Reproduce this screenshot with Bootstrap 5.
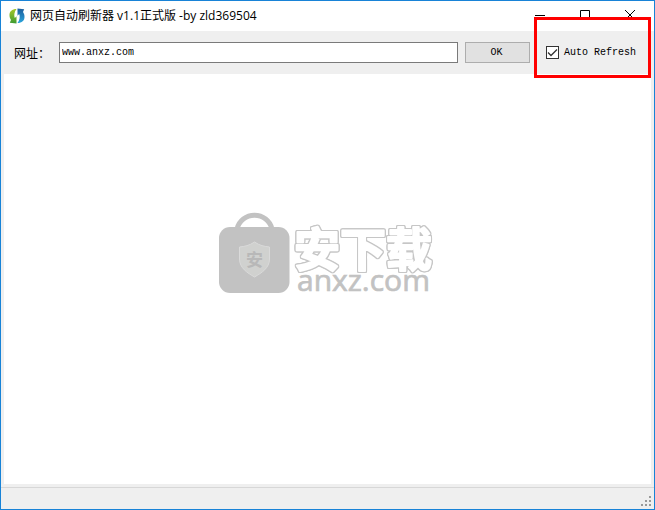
<!DOCTYPE html>
<html lang="zh-CN">
<head>
<meta charset="utf-8">
<meta name="viewport" content="width=device-width, initial-scale=1">
<title>网页自动刷新器</title>
<link href="https://cdn.jsdelivr.net/npm/bootstrap@5.3.0/dist/css/bootstrap.min.css" rel="stylesheet">
<style>
body { font-family: "Open Sans", "Noto Sans CJK SC", sans-serif; font-size: 12px; line-height: 16px; color: #000; }
.app-window { border: 1px solid #1883d7; background: #efefef; }
.title-bar { height: 30px; padding: 0 2px 0 8px; gap: 5px; }
.win-btn { width: 45px; height: 28px; }
.tool-bar { height: 43px; padding: 0 18px 0 13px; gap: 7px; }
.url-label { font-family: "Noto Sans CJK SC", sans-serif; width: 38px; }
.url-input, .ok-btn, .auto-label { font-family: "Liberation Mono", "Noto Sans CJK SC", monospace; font-size: 10px; line-height: 14px; color: #000; }
.url-input { height: 21px; min-width: 0; border: 1px solid #7a7a7a; background: #fff; padding: 0 2px; outline: 0; }
.ok-btn { width: 65px; height: 21px; border: 1px solid #adadad; background: #e1e1e1; padding: 0 2px 0 0; }
.auto-wrap { margin-left: 9px; gap: 5px; }
.auto-box { appearance: none; width: 13px; height: 13px; margin: 0; border: 1px solid #333; background: #fff; }
.auto-box:checked { background: #fff url("data:image/svg+xml,%3Csvg xmlns='http://www.w3.org/2000/svg' viewBox='0 0 11 11'%3E%3Cpath d='M1 5.5 4 8.5 10 2.5' fill='none' stroke='%23333' stroke-width='1.3'/%3E%3C/svg%3E"); }
.auto-wrap::after { content: ""; position: absolute; inset: -29px -15px -18px -12px; border: 3px solid #f00; pointer-events: none; }
.page-view { background: #fff; margin: 0 3px; padding: 0 5px 52px 0; }
.brand-art { width: 218px; height: 86px; }
.brand-outline { filter: drop-shadow(1px 0 0 #c6c6c6) drop-shadow(-1px 0 0 #c6c6c6) drop-shadow(0 1px 0 #c6c6c6) drop-shadow(0 -1px 0 #c6c6c6); }
.status-bar { height: 22px; margin-top: 3px; border-top: 1px solid #d7d7d7; padding: 0 2px 2px 0; }
</style>
</head>
<body>
<div class="app-window vh-100 d-flex flex-column overflow-hidden">
  <header class="title-bar bg-white d-flex align-items-center flex-shrink-0">
    <svg width="16" height="16" viewBox="0 0 16 16" aria-hidden="true">
      <defs>
        <linearGradient id="leafGreen" x2="0" y2="1"><stop stop-color="#a5c828"/><stop offset="1" stop-color="#3c9a32"/></linearGradient>
        <linearGradient id="leafBlue" x2="0" y2="1"><stop stop-color="#1c5d9c"/><stop offset="1" stop-color="#2aa5dc"/></linearGradient>
      </defs>
      <path d="M7.500 1C3 1 .5 3.500.500 7c0 2 .5 3.500 1.500 5L.8 14.800l6.700.7V8.300L5.800 10C4.800 7.500 5.200 4 7.500 1z" fill="url(#leafGreen)"/>
      <path d="M8.500 15c4.500 0 7-2.500 7-6 0-2-.5-3.500-1.500-5l1.200-2.800L8.500.5v7.200L10.200 6c1 2.500.6 6-1.700 9z" fill="url(#leafBlue)"/>
    </svg>
    <span class="text-nowrap me-auto">网页自动刷新器 v1.1正式版 -by zld369504</span>
    <div class="d-flex align-self-start">
      <button class="win-btn btn p-0 border-0 rounded-0 d-flex align-items-center justify-content-center" type="button" aria-label="最小化"><svg width="10" height="10" viewBox="0 0 10 10"><path d="M0 5.500h10" stroke="#000"/></svg></button>
      <button class="win-btn btn p-0 border-0 rounded-0 d-flex align-items-center justify-content-center" type="button" aria-label="最大化"><svg width="10" height="10" viewBox="0 0 10 10"><path d="M.5.5h9v9h-9z" fill="none" stroke="#000"/></svg></button>
      <button class="win-btn btn p-0 border-0 rounded-0 d-flex align-items-center justify-content-center" type="button" aria-label="关闭"><svg width="10" height="10" viewBox="0 0 10 10"><path d="M0 0l10 10M10 0L0 10" stroke="#000"/></svg></button>
    </div>
  </header>
  <form class="tool-bar d-flex align-items-center flex-shrink-0">
    <label class="url-label text-nowrap flex-shrink-0" for="url">网址：</label>
    <input class="url-input flex-grow-1" id="url" type="text" value="www.anxz.com">
    <button class="ok-btn flex-shrink-0" type="button">OK</button>
    <div class="auto-wrap position-relative d-flex align-items-center flex-shrink-0">
      <input class="auto-box" id="auto" type="checkbox" checked>
      <label class="auto-label text-nowrap" for="auto">Auto Refresh</label>
    </div>
  </form>
  <main class="page-view flex-grow-1 d-flex align-items-center justify-content-center">
    <svg class="brand-art" viewBox="216 210 218 86" role="img" aria-label="安下载 anxz.com">
      <path d="M237 229a18 18 0 0 1 35 0" fill="none" stroke="#c2c2c2" stroke-width="5"/>
      <rect x="219" y="227" width="70.500" height="66" rx="11" fill="#c2c2c2"/>
      <path d="M254.500 242c5 3.500 10 4.500 15 5v12c0 9-8 14-15 18-7-4-15-9-15-18v-12c5-.5 10-1.500 15-5z" fill="#d0d1cf" stroke="#dadada"/>
      <text x="254.500" y="266" text-anchor="middle" font-family="Noto Sans CJK SC" font-weight="700" font-size="17" fill="#b8b8b8">安</text>
      <text class="brand-outline" x="294" y="266" font-family="Noto Sans CJK SC" font-weight="700" font-size="46" fill="#fff" stroke="#fff" stroke-width="2" stroke-linejoin="round">安下载</text>
      <text x="297" y="291" font-family="Open Sans" font-size="30" fill="#c2c2c2" stroke="#c2c2c2" stroke-width=".7">anxz.com</text>
    </svg>
  </main>
  <footer class="status-bar d-flex align-items-end justify-content-end flex-shrink-0">
    <svg width="11" height="11" viewBox="0 0 11 11" aria-hidden="true"><path d="M8 0h2v2H8zM4 4h2v2H4zM8 4h2v2H8zM0 8h2v2H0zM4 8h2v2H4zM8 8h2v2H8z" fill="#999"/></svg>
  </footer>
</div>
<script src="https://cdn.jsdelivr.net/npm/bootstrap@5.3.0/dist/js/bootstrap.bundle.min.js"></script>
</body>
</html>
